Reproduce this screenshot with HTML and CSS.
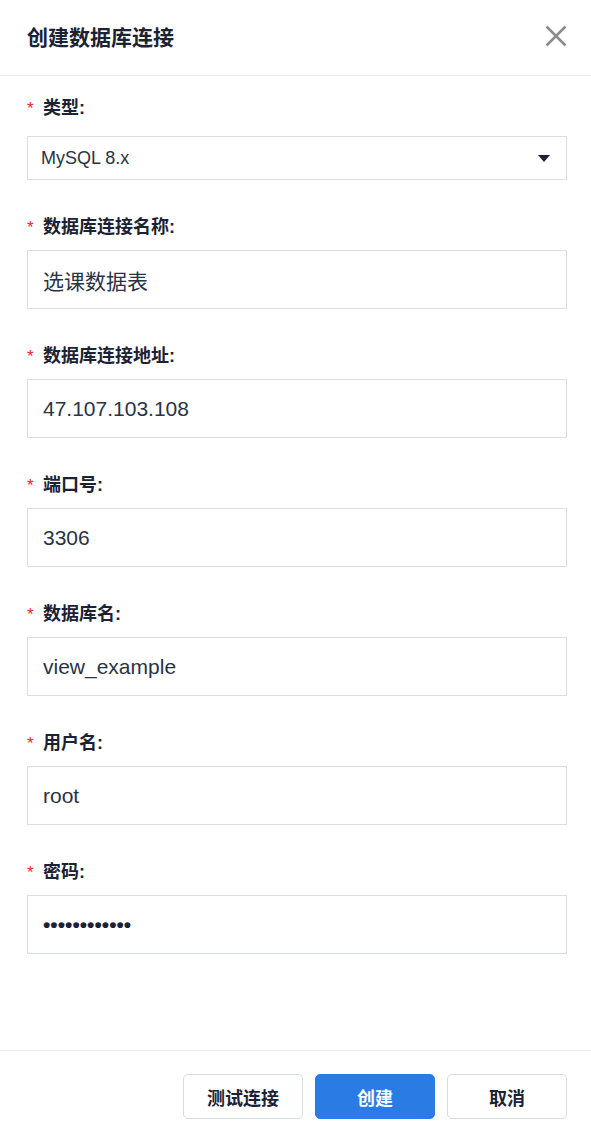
FILE: index.html
```html
<!DOCTYPE html>
<html lang="zh">
<head>
<meta charset="utf-8">
<link rel="stylesheet" href="styles.css">
</head>
<body>
<div class="dialog">
  <div class="header">
    <div class="title">创建数据库连接</div>
    <svg class="close" width="22" height="22" viewBox="0 0 22 22"><path d="M1.5 1.5 L20.5 20.5 M20.5 1.5 L1.5 20.5" stroke="#8c8c8c" stroke-width="2.6" fill="none"/></svg>
  </div>
  <div class="body">
    <div class="field field-select">
      <div class="label"><span class="req">*</span>类型:</div>
      <div class="select"><span>MySQL 8.x</span><svg width="12" height="7" viewBox="0 0 12 7"><path d="M0 0 H12 L6 7 Z" fill="#1a2233"/></svg></div>
    </div>
    <div class="field">
      <div class="label"><span class="req">*</span>数据库连接名称:</div>
      <div class="input">选课数据表</div>
    </div>
    <div class="field">
      <div class="label"><span class="req">*</span>数据库连接地址:</div>
      <div class="input">47.107.103.108</div>
    </div>
    <div class="field">
      <div class="label"><span class="req">*</span>端口号:</div>
      <div class="input">3306</div>
    </div>
    <div class="field">
      <div class="label"><span class="req">*</span>数据库名:</div>
      <div class="input">view_example</div>
    </div>
    <div class="field">
      <div class="label"><span class="req">*</span>用户名:</div>
      <div class="input">root</div>
    </div>
    <div class="field">
      <div class="label"><span class="req">*</span>密码:</div>
      <div class="input pwd">••••••••••••</div>
    </div>
  </div>
  <div class="footer">
    <button class="btn">测试连接</button>
    <button class="btn primary">创建</button>
    <button class="btn">取消</button>
  </div>
</div>
</body>
</html>
```
FILE: styles.css
```css
* { box-sizing: border-box; }
html, body { margin: 0; padding: 0; background: #fff; }
body {
  font-family: "Liberation Sans", "Noto Sans CJK SC", sans-serif;
  color: #1a2233;
}
.dialog {
  width: 591px;
  height: 1134px;
  display: flex;
  flex-direction: column;
}
.header {
  height: 76px;
  border-bottom: 1px solid #e8ebf0;
  display: flex;
  align-items: center;
  justify-content: space-between;
  padding: 0 24px 3px 27px;
}
.title {
  font-size: 21px;
  font-weight: 700;
  color: #1a2233;
}
.close { display: block; }
.body {
  flex: 1;
  padding: 20px 24px 0 27px;
}
.field { margin-bottom: 35px; }
.label {
  font-size: 18px;
  font-weight: 700;
  height: 24px;
  line-height: 24px;
  display: flex;
  align-items: center;
  margin-bottom: 11px;
  color: #1a2233;
}
.field-select .label { margin-bottom: 16px; }
.req {
  color: #f5222d;
  font-weight: 400;
  font-size: 17px;
  width: 16px;
  position: relative;
  top: 1px;
}
.select {
  height: 44px;
  border: 1px solid #d8dde6;
  display: flex;
  align-items: center;
  justify-content: space-between;
  padding: 0 16px 0 13px;
  font-size: 18px;
  color: #2a3344;
}
.input {
  height: 59px;
  border: 1px solid #d8dde6;
  display: flex;
  align-items: center;
  padding: 0 15px;
  font-size: 21px;
  color: #2a3344;
}
.input.pwd { font-size: 21px; font-weight: 700; color: #1a2233; }
.footer {
  height: 84px;
  border-top: 1px solid #e8ebf0;
  display: flex;
  justify-content: flex-end;
  align-items: flex-start;
  gap: 12px;
  padding: 23px 24px 0 0;
}
.btn {
  width: 120px;
  height: 45px;
  border: 1px solid #d8dde6;
  border-radius: 5px;
  background: #fff;
  font-family: "Liberation Sans", "Noto Sans CJK SC", sans-serif;
  font-size: 18px;
  font-weight: 700;
  color: #1a2233;
}
.btn.primary {
  background: #2b7be5;
  border-color: #2b7be5;
  color: #fff;
}
```
